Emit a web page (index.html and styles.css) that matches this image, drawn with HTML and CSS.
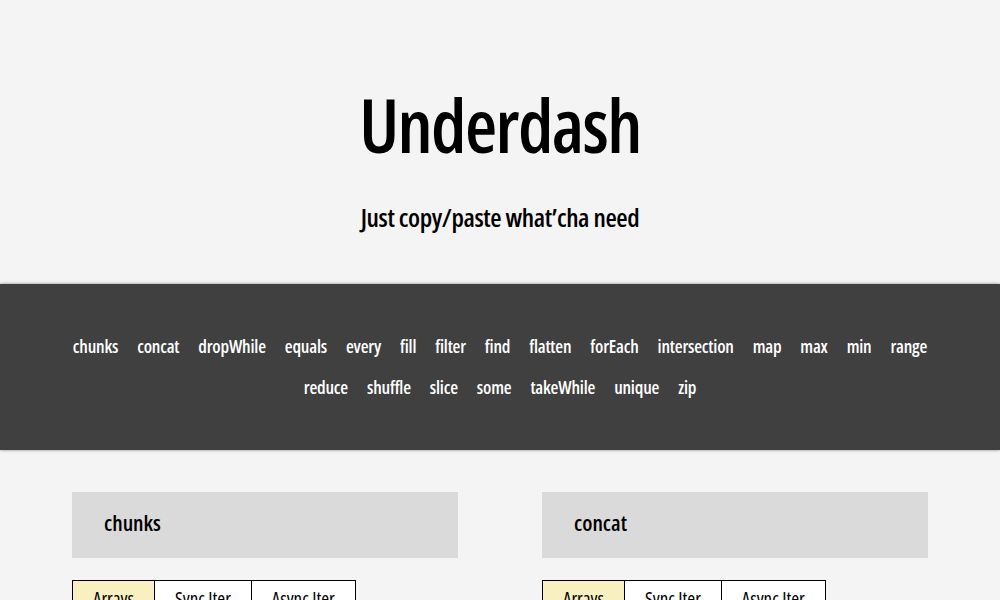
FILE: index.html
```html
<!DOCTYPE html>
<html lang="en">
<head>
<meta charset="utf-8">
<title>Underdash</title>
<link rel="stylesheet" href="styles.css">
</head>
<body>
<header class="hero">
  <h1 class="title">Underdash</h1>
  <p class="tagline">Just copy/paste what’cha need</p>
</header>
<nav class="band">
  <ul class="links">
    <li><a href="#chunks">chunks</a></li>
    <li><a href="#concat">concat</a></li>
    <li><a href="#dropWhile">dropWhile</a></li>
    <li><a href="#equals">equals</a></li>
    <li><a href="#every">every</a></li>
    <li><a href="#fill">fill</a></li>
    <li><a href="#filter">filter</a></li>
    <li><a href="#find">find</a></li>
    <li><a href="#flatten">flatten</a></li>
    <li><a href="#forEach">forEach</a></li>
    <li><a href="#intersection">intersection</a></li>
    <li><a href="#map">map</a></li>
    <li><a href="#max">max</a></li>
    <li><a href="#min">min</a></li>
    <li><a href="#range">range</a></li>
  </ul>
  <ul class="links">
    <li><a href="#reduce">reduce</a></li>
    <li><a href="#shuffle">shuffle</a></li>
    <li><a href="#slice">slice</a></li>
    <li><a href="#some">some</a></li>
    <li><a href="#takeWhile">takeWhile</a></li>
    <li><a href="#unique">unique</a></li>
    <li><a href="#zip">zip</a></li>
  </ul>
</nav>
<main class="grid">
  <section class="fn" id="chunks">
    <h2 class="fn-name">chunks</h2>
    <div class="tabs">
      <span class="tab active">Arrays</span>
      <span class="tab">Sync Iter</span>
      <span class="tab">Async Iter</span>
    </div>
  </section>
  <section class="fn" id="concat">
    <h2 class="fn-name">concat</h2>
    <div class="tabs">
      <span class="tab active">Arrays</span>
      <span class="tab">Sync Iter</span>
      <span class="tab">Async Iter</span>
    </div>
  </section>
</main>
</body>
</html>
```
FILE: styles.css
```css
html, body {
  margin: 0;
  padding: 0;
}
body {
  background: #f4f4f4;
  color: #000;
  font-family: "Open Sans", "DejaVu Sans Condensed", sans-serif;
  font-stretch: 75%;
  overflow: hidden;
}
.hero {
  text-align: center;
  padding-top: 80px;
  height: 203px;
  box-sizing: border-box;
}
.title {
  margin: 0;
  font-size: 74px;
  line-height: 90px;
  font-weight: 600;
  letter-spacing: -1.6px;
}
.tagline {
  margin: 32px 0 0;
  font-size: 26px;
  line-height: 30px;
  font-weight: 600;
  letter-spacing: -0.4px;
}
.band {
  margin-top: 81px;
  background: #404040;
  height: 166px;
  box-shadow: 0 0 3px rgba(0, 0, 0, 0.45);
  display: flex;
  flex-direction: column;
  align-items: center;
  justify-content: center;
  row-gap: 16px;
}
.links {
  list-style: none;
  margin: 0;
  padding: 0;
  display: flex;
  justify-content: center;
  column-gap: 19px;
}
.links a {
  color: #fff;
  text-decoration: none;
  font-size: 18px;
  line-height: 25px;
  font-weight: 600;
  letter-spacing: -0.2px;
}
.grid {
  width: 856px;
  margin: 42px auto 0;
  display: grid;
  grid-template-columns: 386px 386px;
  column-gap: 84px;
}
.fn-name {
  margin: 0;
  background: #dadada;
  height: 66px;
  padding: 0 0 0 32px;
  font-size: 22px;
  font-weight: 600;
  line-height: 61px;
}
.tabs {
  margin-top: 22px;
  display: flex;
}
.tab {
  border: 1px solid #000;
  border-left: none;
  background: #fff;
  font-size: 19px;
  font-weight: 500;
  line-height: 36px;
  padding: 0 20px;
}
.tab:first-child {
  border-left: 1px solid #000;
}
.tab.active {
  background: #f8f0c0;
}
```
